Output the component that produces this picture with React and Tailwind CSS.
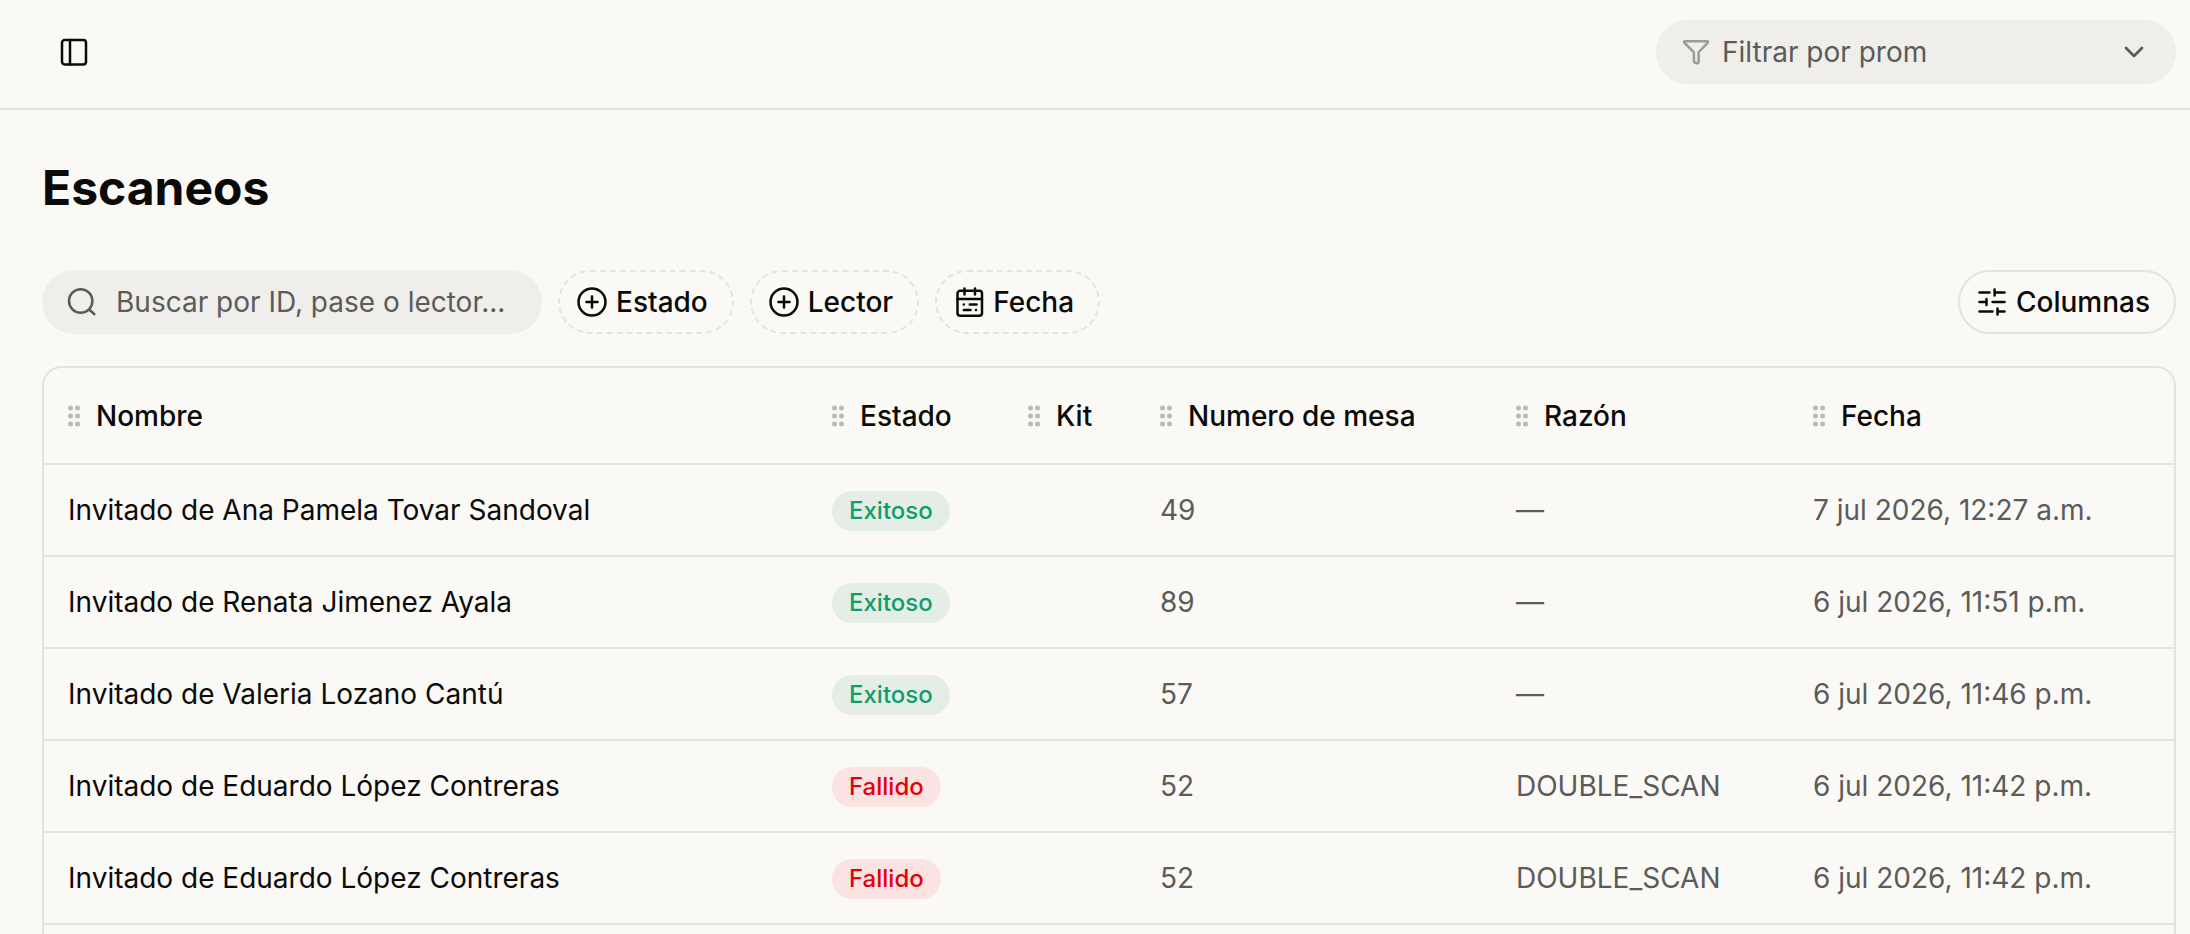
import { useState } from 'react';
import { ChevronDown } from 'lucide-react';

const columns = [
  { key: 'nombre', label: 'Nombre', width: 'w-[764px]' },
  { key: 'estado', label: 'Estado', width: 'w-[196px]' },
  { key: 'kit', label: 'Kit', width: 'w-[132px]' },
  { key: 'mesa', label: 'Numero de mesa', width: 'w-[356px]' },
  { key: 'razon', label: 'Razón', width: 'w-[297px]' },
  { key: 'fecha', label: 'Fecha', width: 'w-[385px]' },
];

const scans = [
  { id: 1, nombre: 'Invitado de Ana Pamela Tovar Sandoval', ok: true, mesa: 49, razon: '—', fecha: '7 jul 2026, 12:27 a.m.' },
  { id: 2, nombre: 'Invitado de Renata Jimenez Ayala', ok: true, mesa: 89, razon: '—', fecha: '6 jul 2026, 11:51 p.m.' },
  { id: 3, nombre: 'Invitado de Valeria Lozano Cantú', ok: true, mesa: 57, razon: '—', fecha: '6 jul 2026, 11:46 p.m.' },
  { id: 4, nombre: 'Invitado de Eduardo López Contreras', ok: false, mesa: 52, razon: 'DOUBLE_SCAN', fecha: '6 jul 2026, 11:42 p.m.' },
  { id: 5, nombre: 'Invitado de Eduardo López Contreras', ok: false, mesa: 52, razon: 'DOUBLE_SCAN', fecha: '6 jul 2026, 11:42 p.m.' },
];

const Icon = ({ className = '', children }) => (
  <svg
    viewBox="0 0 32 32"
    fill="none"
    stroke="currentColor"
    strokeWidth="2.5"
    strokeLinecap="round"
    strokeLinejoin="round"
    aria-hidden="true"
    className={`size-8 shrink-0 ${className}`}
  >
    {children}
  </svg>
);

const PanelIcon = () => (
  <Icon>
    <rect x="4" y="4" width="24" height="24.500" rx="2.700" />
    <path d="M12 4v24.500" />
  </Icon>
);

const FilterIcon = () => (
  <Icon className="text-[#9b9b99]">
    <path d="M5 5.200h22c.9 0 1.200 1 .6 1.600l-8.300 8.700c-.5.500-.7 1-.7 1.700v8.500c0 1.100-.8 1.700-1.800 1.500l-1.700-.4c-.8-.2-1.200-.7-1.200-1.500v-8.100c0-.7-.2-1.200-.7-1.700L4.400 6.800c-.6-.6-.3-1.600.6-1.600z" />
  </Icon>
);

const SearchIcon = () => (
  <Icon>
    <circle cx="14.700" cy="15" r="11.700" />
    <path d="M23.200 23.500l5.200 4.700" />
  </Icon>
);

const PlusCircleIcon = () => (
  <Icon>
    <circle cx="16" cy="16" r="13.500" />
    <path d="M16 10.500v11M10.500 16h11" />
  </Icon>
);

const CalendarIcon = () => (
  <Icon>
    <rect x="4.500" y="4.800" width="24.500" height="25" rx="2.700" />
    <path d="M11.500 2.500v6M22 2.500v6M4.500 13h24.500M10.800 18.500h.01M16.800 18.500h6.700M10.800 24h6.700M23 24h.01" />
  </Icon>
);

const SlidersIcon = () => (
  <Icon>
    <path d="M3.500 6.500h10M18.600 6.500h9.900M18.600 3.500v6M3.500 16h7M10.500 13v6M16.600 16h11.900M3.500 25.500h13M21.500 25.500h7M21.500 22.500v6" />
  </Icon>
);

const GripIcon = () => (
  <svg viewBox="0 0 12 22" fill="currentColor" aria-hidden="true" className="h-[22px] w-3 shrink-0 text-[#b9b9b7]">
    {[3, 11, 19].map((y) => (
      <g key={y}>
        <circle cx="2.500" cy={y} r="2.500" />
        <circle cx="9.500" cy={y} r="2.500" />
      </g>
    ))}
  </svg>
);

const FilterChip = ({ icon, children }) => (
  <button
    type="button"
    className="flex h-16 items-center gap-2 rounded-full border-2 border-dashed border-[#e4e3df] pr-6 pl-4 font-medium"
  >
    {icon}
    {children}
  </button>
);

const StatusBadge = ({ ok }) => (
  <span
    className={`inline-flex h-10 items-center rounded-full px-[17px] align-middle text-2xl font-medium ${
      ok ? 'bg-[#e4eee6] text-[#0f9d6b]' : 'bg-[#fbe3e1] text-[#e7000b]'
    }`}
  >
    {ok ? 'Exitoso' : 'Fallido'}
  </span>
);

const App = () => {
  const [query, setQuery] = useState('');

  return (
    <div className="h-screen overflow-hidden bg-[#faf9f5] font-['Inter',sans-serif] text-[28px] leading-10 text-[#0c0a09]">
      <header className="flex h-[110px] items-center justify-between border-b-2 border-[#e4e3df] pr-[14px] pb-1 pl-[42px]">
        <button type="button" aria-label="Mostrar u ocultar menú" className="flex size-16 items-center justify-center">
          <PanelIcon />
        </button>
        <button
          type="button"
          aria-haspopup="listbox"
          className="flex h-16 w-[520px] items-center gap-[10px] rounded-full bg-[#efeeea] pr-[26px] pl-6 text-[#5b5b5a]"
        >
          <FilterIcon />
          <span className="flex-1 text-left">Filtrar por prom</span>
          <ChevronDown className="size-8" strokeWidth={2} />
        </button>
      </header>

      <main className="pt-[50px] pr-[14px] pl-[42px]">
        <h1 className="text-5xl leading-[56px] font-bold">Escaneos</h1>

        <div className="mt-[54px] flex items-center justify-between">
          <div className="flex items-center gap-4">
            <label className="flex h-16 w-[500px] items-center gap-[18px] rounded-full bg-[#efeeea] px-6 text-[#5b5b5a]">
              <SearchIcon />
              <input
                type="text"
                aria-label="Buscar escaneos"
                value={query}
                onChange={(e) => setQuery(e.target.value)}
                placeholder="Buscar por ID, pase o lector..."
                className="min-w-0 flex-1 bg-transparent outline-none placeholder:text-[#5b5b5a]"
              />
            </label>
            <FilterChip icon={<PlusCircleIcon />}>Estado</FilterChip>
            <FilterChip icon={<PlusCircleIcon />}>Lector</FilterChip>
            <FilterChip icon={<CalendarIcon />}>Fecha</FilterChip>
          </div>
          <button
            type="button"
            className="flex h-16 items-center gap-2 rounded-full border-2 border-[#e4e3df] pr-6 pl-4 font-medium"
          >
            <SlidersIcon />
            Columnas
          </button>
        </div>

        <div className="mt-8 overflow-hidden rounded-[20px] border-2 border-[#e4e3df]">
          <table className="w-full table-fixed border-separate border-spacing-0 text-left">
            <thead>
              <tr>
                {columns.map((col) => (
                  <th key={col.key} className={`h-[97px] border-b-2 border-[#e4e3df] px-6 font-medium ${col.width}`}>
                    <div className="flex items-center gap-4 whitespace-nowrap">
                      <GripIcon />
                      {col.label}
                    </div>
                  </th>
                ))}
              </tr>
            </thead>
            <tbody className="text-[#5b5b5a] [&_td]:h-[92px] [&_td]:border-b-2 [&_td]:border-[#e4e3df] [&_td]:px-6 [&_td]:whitespace-nowrap">
              {scans.map((scan) => (
                <tr key={scan.id}>
                  <td className="text-[#0c0a09]">{scan.nombre}</td>
                  <td>
                    <StatusBadge ok={scan.ok} />
                  </td>
                  <td />
                  <td>{scan.mesa}</td>
                  <td>{scan.razon}</td>
                  <td>{scan.fecha}</td>
                </tr>
              ))}
              <tr>
                <td colSpan={columns.length} />
              </tr>
            </tbody>
          </table>
        </div>
      </main>
    </div>
  );
};

export default App;
